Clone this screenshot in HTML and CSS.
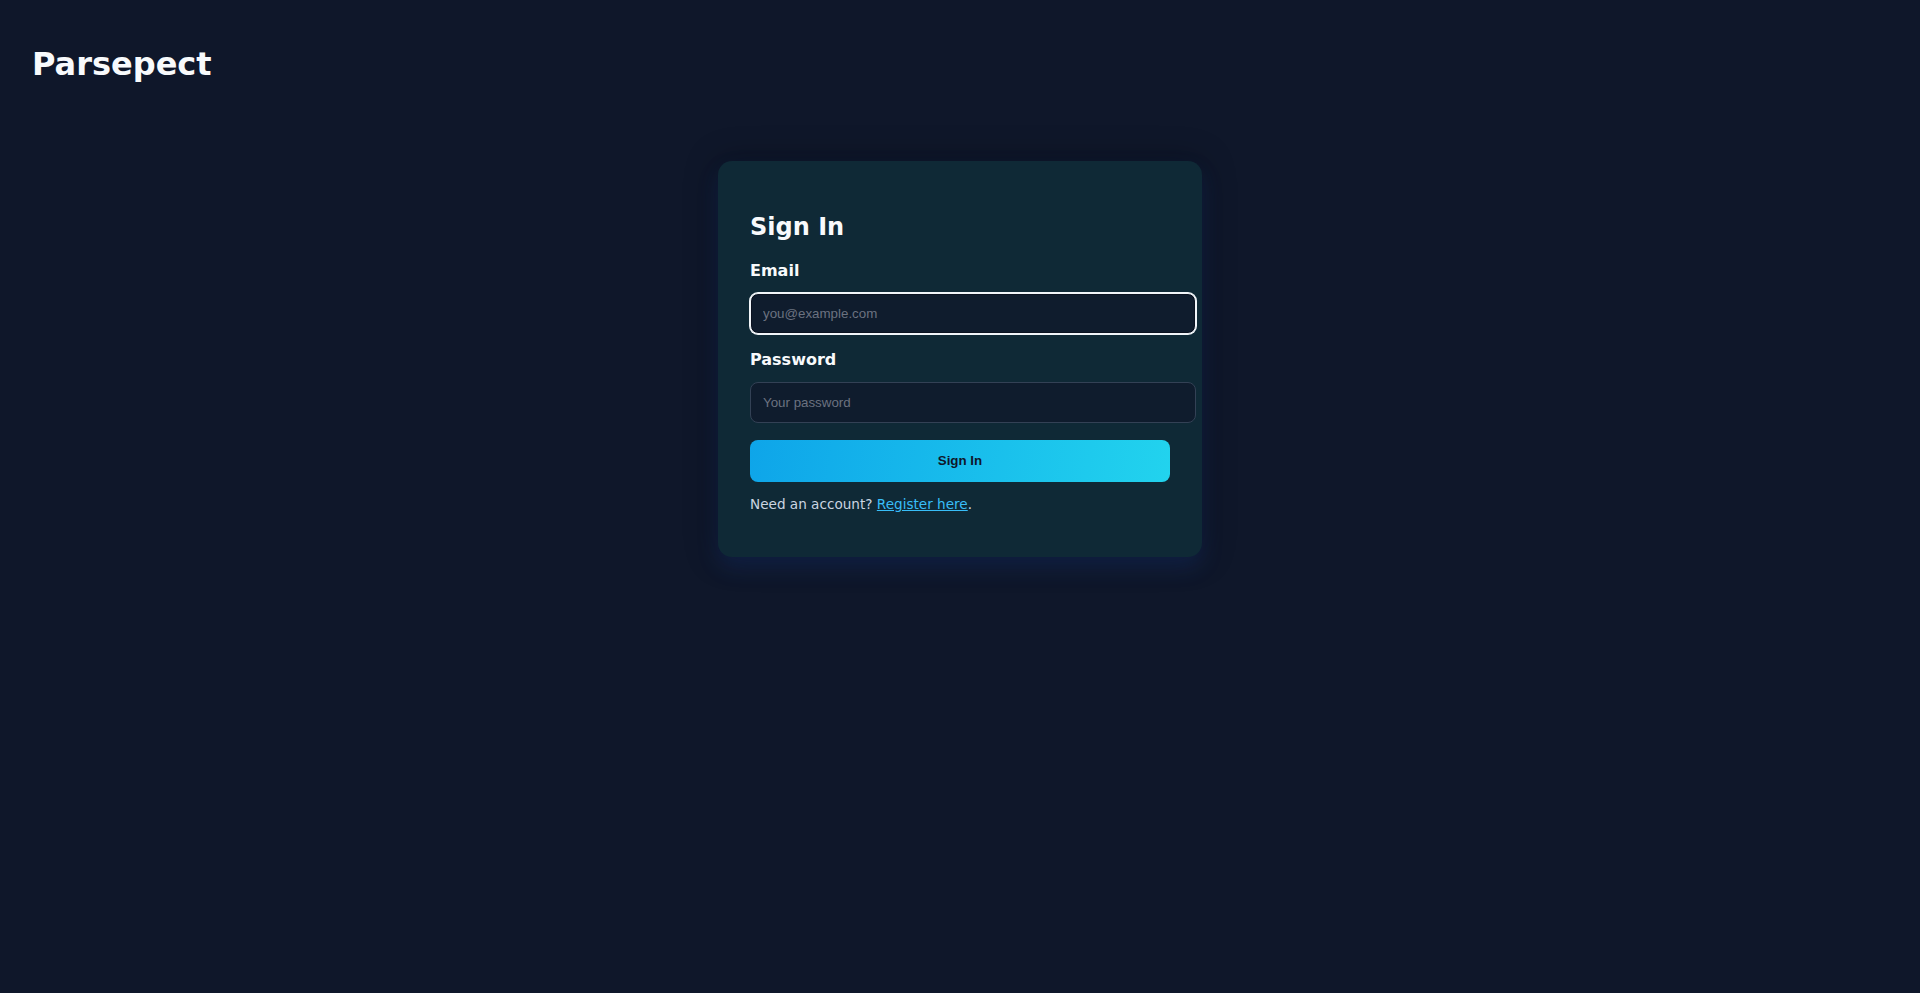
FILE: index.html
```html
<!DOCTYPE html>
<html lang="en">
<head>
<meta charset="utf-8">
<title>Parsepect - Sign In</title>
<link rel="stylesheet" href="styles.css">
</head>
<body>
<header class="site-header">
  <div class="logo">Parsepect</div>
</header>
<main class="main">
  <section class="card">
    <h2 class="card-title">Sign In</h2>
    <form class="form">
      <label class="label" for="email">Email</label>
      <input class="input input-focus" id="email" type="email" placeholder="you@example.com">
      <label class="label" for="password">Password</label>
      <input class="input" id="password" type="password" placeholder="Your password">
      <button class="btn" type="button">Sign In</button>
    </form>
    <p class="footnote">Need an account? <a class="link" href="#">Register here</a>.</p>
  </section>
</main>
</body>
</html>
```

FILE: styles.css
```css
html, body {
  margin: 0;
  padding: 0;
  background: #0f172a;
  min-height: 100%;
}
body {
  font-family: "DejaVu Sans", sans-serif;
  color: #f1f5f9;
  min-height: 993px;
}
.site-header {
  padding: 45px 32px 0;
}
.logo {
  font-size: 32px;
  font-weight: bold;
  color: #f8fafc;
  line-height: normal;
}
.main {
  display: flex;
  justify-content: center;
  padding-top: 78px;
}
.card {
  width: 420px;
  padding: 32px;
  background: #0f2936;
  border-radius: 14px;
  box-shadow: 0 10px 22px rgba(37, 99, 235, 0.16), 0 0 32px rgba(0, 0, 0, 0.35);
}
.card-title {
  font-size: 24px;
  font-weight: bold;
  margin: 20px 0 20px;
  line-height: normal;
  color: #f8fafc;
}
.form {
  display: flex;
  flex-direction: column;
  align-items: flex-start;
}
.label {
  display: block;
  font-size: 16px;
  font-weight: bold;
  color: #f8fafc;
  margin-bottom: 13px;
  line-height: normal;
}
.input {
  width: 420px;
  padding: 12px;
  border: 1px solid #334155;
  border-radius: 8px;
  background: #0f1c2d;
  color: #e2e8f0;
  font-family: "Liberation Sans", Arial, sans-serif;
  font-size: 13.33px;
  line-height: 15px;
  margin: 0 0 16px;
  outline: none;
}
.input::placeholder {
  color: #6b7280;
}
.input-focus {
  border: 1px solid #f1f5f9;
  box-shadow: 0 0 0 1px #f1f5f9, inset 0 0 0 1px #0b1220;
}
.btn {
  width: 420px;
  margin-top: 1px;
  padding: 13px 0;
  line-height: 16px;
  border: none;
  border-radius: 8px;
  background: linear-gradient(100deg, #0ea5e9, #22d3ee);
  color: #0f172a;
  font-family: "Liberation Sans", Arial, sans-serif;
  font-size: 13.33px;
  font-weight: bold;
  cursor: pointer;
}
.footnote {
  margin: 13.6px 0;
  font-size: 13.6px;
  color: #cbd5e1;
  line-height: normal;
}
.link {
  color: #38bdf8;
  text-decoration: underline;
}
```
